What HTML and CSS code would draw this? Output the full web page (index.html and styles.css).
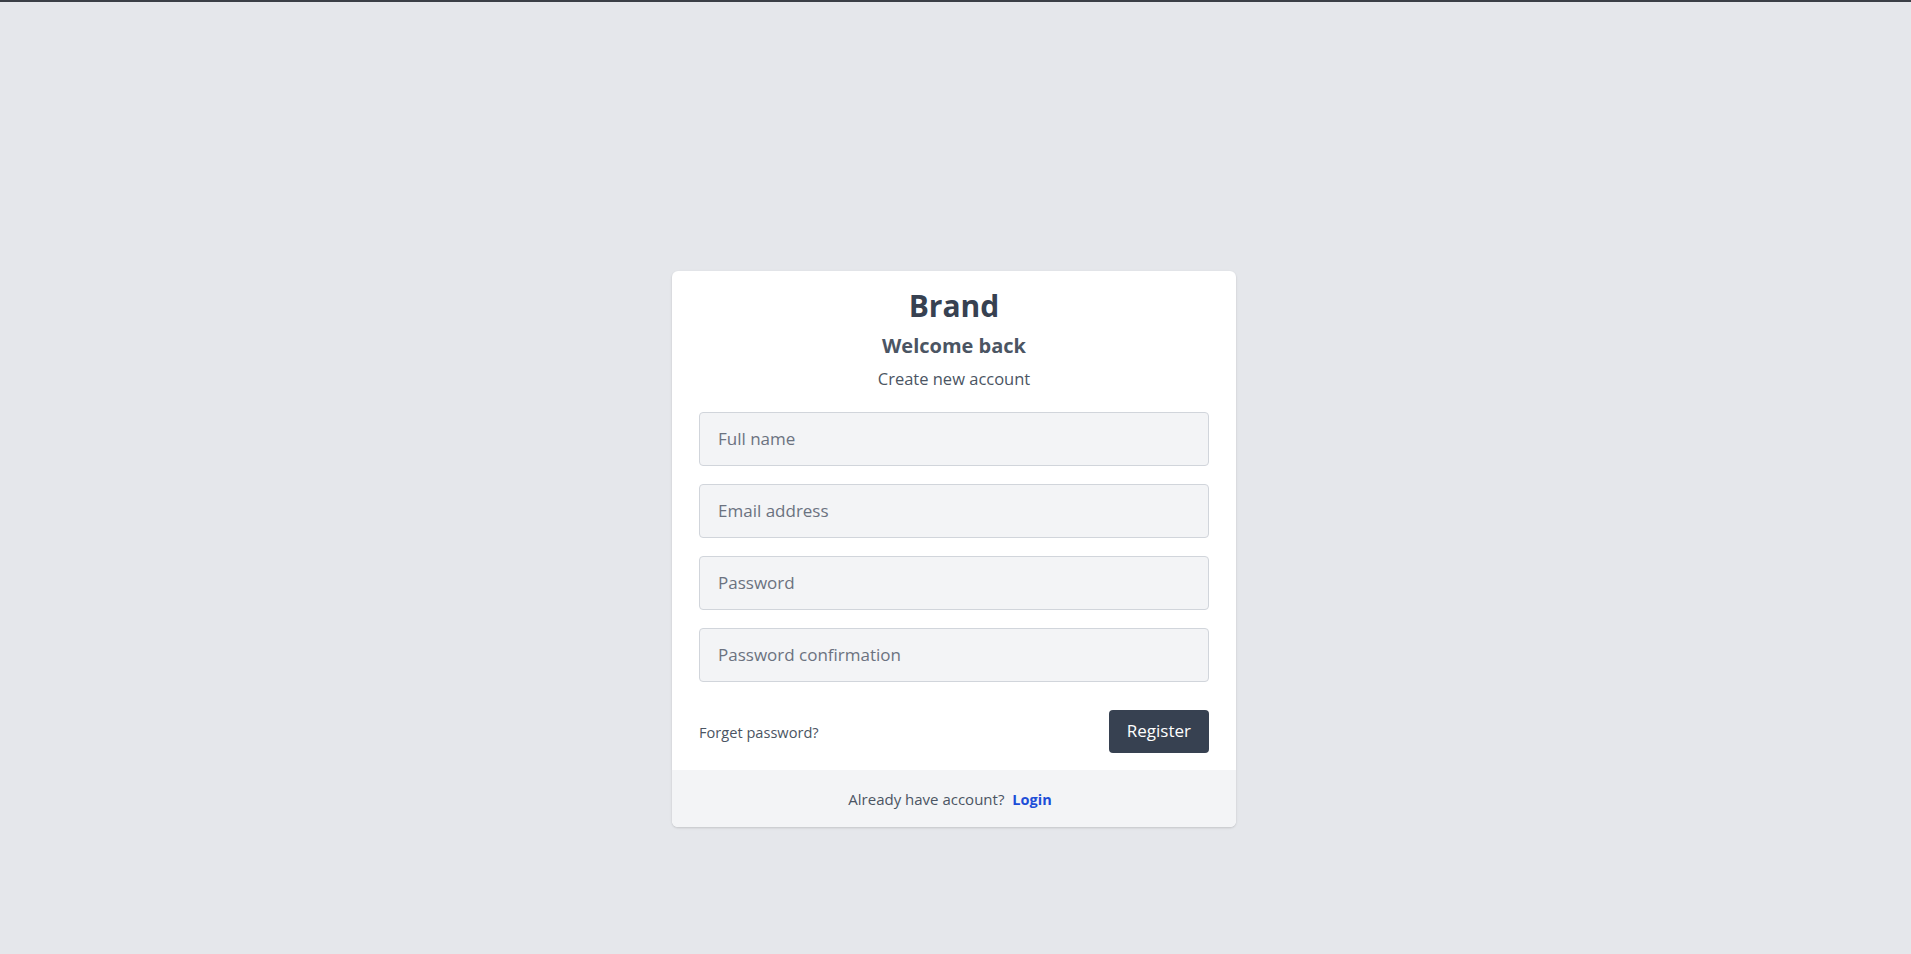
FILE: index.html
```html
<!DOCTYPE html>
<html lang="en">
<head>
<meta charset="utf-8">
<title>Register</title>
<link rel="stylesheet" href="styles.css">
</head>
<body>
<main class="page">
  <section class="card">
    <div class="card-body">
      <h1 class="brand">Brand</h1>
      <h2 class="welcome">Welcome back</h2>
      <p class="subtitle">Create new account</p>
      <form class="form">
        <input class="field" type="text" placeholder="Full name">
        <input class="field" type="email" placeholder="Email address">
        <input class="field" type="password" placeholder="Password">
        <input class="field" type="password" placeholder="Password confirmation">
        <div class="actions">
          <a class="forgot" href="#">Forget password?</a>
          <button class="btn" type="button">Register</button>
        </div>
      </form>
    </div>
    <div class="card-footer">
      <span>Already have account?</span><a class="login" href="#">Login</a>
    </div>
  </section>
</main>
</body>
</html>
```
FILE: styles.css
```css
* { box-sizing: border-box; }
html, body { margin: 0; padding: 0; }
body {
  background: #e5e7eb;
  border-top: 2px solid #3b3f46;
  min-height: 100vh;
  font-family: "Open Sans", "Noto Sans", "Liberation Sans", sans-serif;
  color: #4b5563;
}
.page {
  display: flex;
  justify-content: center;
  padding-top: 269px;
  padding-right: 3px;
}
.card {
  width: 564px;
  background: #ffffff;
  border-radius: 6px;
  overflow: hidden;
  box-shadow: 0 1px 3px rgba(0,0,0,0.10), 0 1px 2px rgba(0,0,0,0.06);
}
.card-body {
  padding: 15px 27px 17px;
  text-align: center;
}
.brand {
  margin: 0;
  font-size: 30px;
  line-height: 40px;
  font-weight: 700;
  color: #374151;
}
.welcome {
  margin: 6px 0 0;
  font-size: 20px;
  line-height: 28px;
  font-weight: 700;
  color: #4b5563;
}
.subtitle {
  margin: 6.5px 0 0;
  font-size: 16.5px;
  line-height: 24px;
  color: #4b5563;
}
.form {
  margin-top: 21px;
  display: flex;
  flex-direction: column;
  gap: 18px;
  text-align: left;
}
.field {
  display: block;
  width: 100%;
  height: 54px;
  padding: 12px 18px;
  font: inherit;
  font-size: 17px;
  line-height: 28px;
  color: #374151;
  background: #f3f4f6;
  border: 1px solid #d1d5db;
  border-radius: 4px;
  outline: none;
}
.field::placeholder { color: #6b7280; opacity: 1; }
.actions {
  margin-top: 10.5px;
  display: flex;
  justify-content: space-between;
  align-items: center;
}
.forgot {
  font-size: 14.6px;
  color: #4b5563;
  text-decoration: none;
}
.btn {
  height: 43px;
  padding: 0 18px 2px;
  font: inherit;
  font-size: 17px;
  line-height: 27px;
  color: #ffffff;
  background: #374151;
  border: none;
  border-radius: 4px;
  cursor: pointer;
}
.card-footer {
  background: #f3f4f6;
  padding: 18px 0 16px;
  text-align: center;
  font-size: 15px;
  line-height: 23px;
  color: #4b5563;
}
.login {
  margin: 0 8px 0 8px;
  color: #1d4ed8;
  font-weight: 700;
  font-size: 14.5px;
  text-decoration: none;
}
```
